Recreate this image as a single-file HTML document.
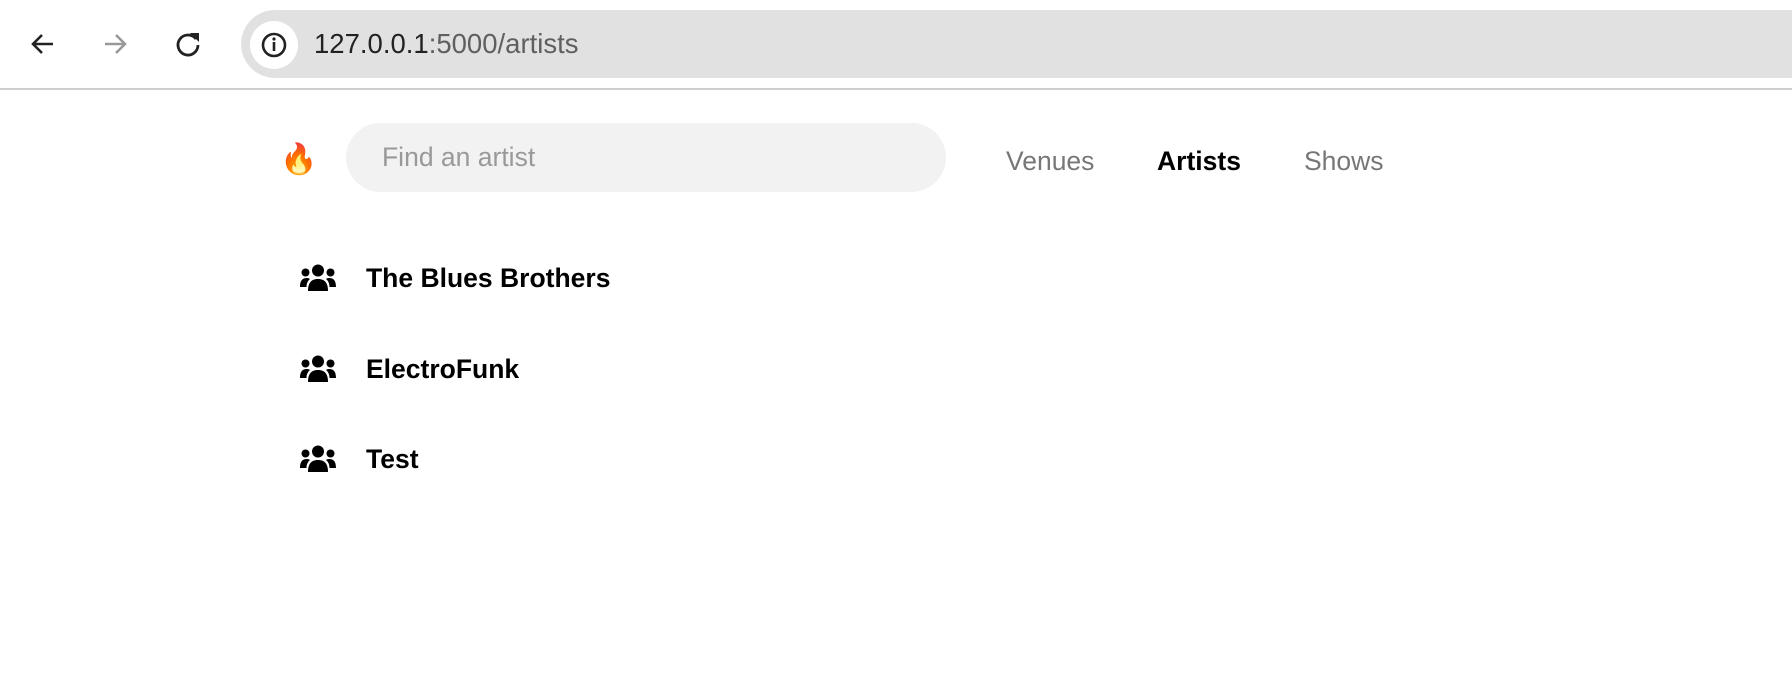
<!DOCTYPE html>
<html><head><meta charset="utf-8"><style>
*{margin:0;padding:0;box-sizing:border-box}
body{width:1792px;height:694px;background:#fff;font-family:"Liberation Sans",Arial,sans-serif;position:relative;overflow:hidden}
.bar{position:absolute;left:0;top:0;width:1792px;height:90px;background:#fff;border-bottom:2px solid #cfcfcf}
.addr{position:absolute;left:241px;top:10px;width:1600px;height:68px;border-radius:34px;background:#e1e1e1}
.info{position:absolute;left:250px;top:21px;width:48px;height:48px;border-radius:50%;background:#fff}
.url{position:absolute;left:314px;top:28px;font-size:27.5px;color:#222}
.url span{color:#5f5f5f}
.ab{position:absolute}
.search{position:absolute;left:346px;top:123px;width:600px;height:69px;border-radius:35px;background:#f2f2f2}
.search span{position:absolute;left:36px;top:19px;font-size:26.5px;color:#999}
.nav{position:absolute;top:146px;font-size:26.5px;color:#777}
.row{position:absolute;left:300px;height:30px}
.row b{position:absolute;left:66px;top:0px;font-size:26.5px;color:#000;white-space:nowrap}
.flame{position:absolute;left:280px;top:140px;font-size:30px;line-height:40px;font-family:"Noto Color Emoji",sans-serif}
</style></head><body>
<div class="bar">
<svg class="ab" style="left:29px;top:30px" width="28" height="28" viewBox="0 0 28 28"><path d="M24 14H5M13 5l-9 9 9 9" fill="none" stroke="#222" stroke-width="2.6"/></svg>
<svg class="ab" style="left:101px;top:30px" width="28" height="28" viewBox="0 0 28 28"><path d="M4 14h19M15 5l9 9-9 9" fill="none" stroke="#999" stroke-width="2.6"/></svg>
<svg class="ab" style="left:174px;top:30px" width="28" height="28" viewBox="0 0 28 28"><path d="M22 9A10 10 0 1 0 24 15" fill="none" stroke="#222" stroke-width="2.8"/><path d="M16 3h9v9z" fill="#222"/></svg>
<div class="addr"></div>
<div class="info"><svg width="48" height="48" viewBox="0 0 48 48"><circle cx="24" cy="24" r="11" fill="none" stroke="#222" stroke-width="2.6"/><rect x="22.7" y="21" width="2.6" height="9" fill="#222"/><circle cx="24" cy="18" r="1.6" fill="#222"/></svg></div>
<div class="url">127.0.0.1<span>:5000/artists</span></div>
</div>
<div class="flame">🔥</div>
<div class="search"><span>Find an artist</span></div>
<div class="nav" style="left:1006px">Venues</div>
<div class="nav" style="left:1157px;color:#000;font-weight:bold">Artists</div>
<div class="nav" style="left:1304px">Shows</div>

<div class="row" style="top:263px"><svg width="36" height="30" viewBox="0 0 36 30"><circle cx="18" cy="7.5" r="6"/><path d="M8 28c0-9 4-12 10-12s10 3 10 12z"/><circle cx="5.5" cy="9.5" r="4"/><circle cx="30.5" cy="9.5" r="4"/><path d="M0 24c0-7 3-9 7-9 1.5 0 2.5.5 3 1-2.5 2-3.5 5-3.5 8z"/><path d="M36 24c0-7-3-9-7-9-1.5 0-2.5.5-3 1 2.5 2 3.5 5 3.5 8z"/></svg><b>The Blues Brothers</b></div>
<div class="row" style="top:354px"><svg width="36" height="30" viewBox="0 0 36 30"><circle cx="18" cy="7.5" r="6"/><path d="M8 28c0-9 4-12 10-12s10 3 10 12z"/><circle cx="5.5" cy="9.5" r="4"/><circle cx="30.5" cy="9.5" r="4"/><path d="M0 24c0-7 3-9 7-9 1.5 0 2.5.5 3 1-2.5 2-3.5 5-3.5 8z"/><path d="M36 24c0-7-3-9-7-9-1.5 0-2.5.5-3 1 2.5 2 3.5 5 3.5 8z"/></svg><b>ElectroFunk</b></div>
<div class="row" style="top:444px"><svg width="36" height="30" viewBox="0 0 36 30"><circle cx="18" cy="7.5" r="6"/><path d="M8 28c0-9 4-12 10-12s10 3 10 12z"/><circle cx="5.5" cy="9.5" r="4"/><circle cx="30.5" cy="9.5" r="4"/><path d="M0 24c0-7 3-9 7-9 1.5 0 2.5.5 3 1-2.5 2-3.5 5-3.5 8z"/><path d="M36 24c0-7-3-9-7-9-1.5 0-2.5.5-3 1 2.5 2 3.5 5 3.5 8z"/></svg><b>Test</b></div>
</body></html>
